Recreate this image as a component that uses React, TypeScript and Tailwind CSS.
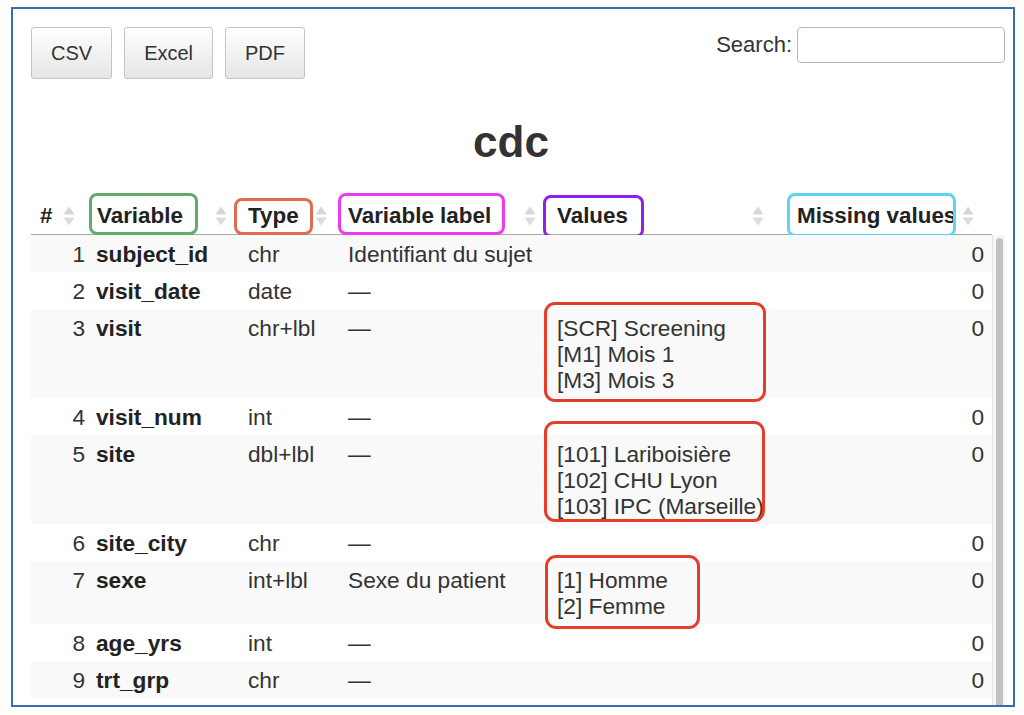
import React from "react";

type Row = {
  n: number;
  name: string;
  type: string;
  label: string;
  values: string[];
  missing: number;
};

const rows: Row[] = [
  { n: 1, name: "subject_id", type: "chr", label: "Identifiant du sujet", values: [], missing: 0 },
  { n: 2, name: "visit_date", type: "date", label: "—", values: [], missing: 0 },
  { n: 3, name: "visit", type: "chr+lbl", label: "—", values: ["[SCR] Screening", "[M1] Mois 1", "[M3] Mois 3"], missing: 0 },
  { n: 4, name: "visit_num", type: "int", label: "—", values: [], missing: 0 },
  { n: 5, name: "site", type: "dbl+lbl", label: "—", values: ["[101] Lariboisière", "[102] CHU Lyon", "[103] IPC (Marseille)"], missing: 0 },
  { n: 6, name: "site_city", type: "chr", label: "—", values: [], missing: 0 },
  { n: 7, name: "sexe", type: "int+lbl", label: "Sexe du patient", values: ["[1] Homme", "[2] Femme"], missing: 0 },
  { n: 8, name: "age_yrs", type: "int", label: "—", values: [], missing: 0 },
  { n: 9, name: "trt_grp", type: "chr", label: "—", values: [], missing: 0 },
];

function SortIcon() {
  return (
    <svg width="12" height="24" viewBox="0 0 12 24" className="shrink-0">
      <polygon points="6,2.5 11.5,10.5 0.5,10.5" fill="#d6d6d6" />
      <polygon points="0.5,13.5 11.5,13.5 6,21.5" fill="#dcdcdc" />
    </svg>
  );
}

const grid = "grid grid-cols-[58px_152px_100px_209px_240px_202px]";

export default function App() {
  return (
    <div className="w-[1024px] h-[715px] bg-white pt-[7px] pl-[11px] font-['Liberation_Sans',Arial,Helvetica,sans-serif] text-[#333]">
      <div className="w-[1004px] h-[700px] border-2 border-[#3b6bb3] overflow-hidden flex flex-col pt-[18px] pl-[18px] pr-[8px]">
        {/* top bar */}
        <div className="flex items-start justify-between">
          <div className="flex gap-3">
            {["CSV", "Excel", "PDF"].map((b) => (
              <button
                key={b}
                className="h-[52px] px-[19px] border border-[#c4c4c4] rounded-[3px] bg-gradient-to-b from-white to-[#e6e6e6] text-[20px] text-[#333] leading-none"
              >
                {b}
              </button>
            ))}
          </div>
          <div className="flex items-center gap-[5px]">
            <span className="text-[22px] leading-[26px] text-[#333]">Search:</span>
            <div className="w-[208px] h-[36px] border border-[#b9b9b9] rounded-[4px] bg-white" />
          </div>
        </div>

        {/* title */}
        <div className="mt-[39px] h-[48px] leading-[48px] text-[44px] font-bold text-center text-[#333] pr-[14px]">
          cdc
        </div>

        {/* header */}
        <div className="mt-[31px] flex">
          <div className={`${grid} relative h-[38px] border-b border-[#a9a9a9] font-bold text-[22.4px] leading-[26px] text-[#222]`}>
            <div className="flex items-center justify-between pl-[9px] pr-[14px]">
              <span>#</span>
              <SortIcon />
            </div>
            <div className="flex items-center justify-between pl-[8px] pr-[14px]">
              <span>Variable</span>
              <SortIcon />
            </div>
            <div className="flex items-center justify-between pl-[7px] pr-[14px]">
              <span>Type</span>
              <SortIcon />
            </div>
            <div className="flex items-center justify-between pl-[7px] pr-[14px]">
              <span>Variable label</span>
              <SortIcon />
            </div>
            <div className="flex items-center justify-between pl-[7px] pr-[26px]">
              <span>Values</span>
              <SortIcon />
            </div>
            <div className="flex items-center justify-between pl-[7px] pr-[18px]">
              <span className="whitespace-nowrap">Missing values</span>
              <SortIcon />
            </div>
            {/* annotation boxes */}
            <div className="absolute left-[58px] top-[-4px] w-[109px] h-[42px] border-[3px] border-[#64aa6e] rounded-[8px]" />
            <div className="absolute left-[203px] top-[1px] w-[79px] h-[37px] border-[3px] border-[#e06b4f] rounded-[8px]" />
            <div className="absolute left-[307px] top-[-4px] w-[167px] h-[42px] border-[3px] border-[#ee3aee] rounded-[8px]" />
            <div className="absolute left-[512px] top-[-2px] w-[101px] h-[43px] border-[3px] border-[#8c1ff2] rounded-[8px]" />
            <div className="absolute left-[756px] top-[-4px] w-[169px] h-[44px] border-[3px] border-[#60d2f6] rounded-[8px]" />
          </div>
          <div className="w-[13px]" />
        </div>

        {/* body */}
        <div className="flex flex-1 min-h-0">
          <div className="relative w-[961px]">
            {rows.map((r, i) => (
              <div
                key={r.n}
                className={`${grid} py-[5.5px] text-[22.7px] leading-[26px] ${i % 2 === 0 ? "bg-[#f9f9f9]" : "bg-white"}`}
              >
                <div className="text-right pr-[4px]">{r.n}</div>
                <div className="pl-[7px] font-bold text-[#222]">{r.name}</div>
                <div className="pl-[7px]">{r.type}</div>
                <div className="pl-[7px] whitespace-nowrap">{r.label}</div>
                <div className="pl-[7px] flex flex-col whitespace-nowrap">
                  {r.values.map((v) => (
                    <span key={v}>{v}</span>
                  ))}
                </div>
                <div className="text-right pr-[8px]">{r.missing}</div>
              </div>
            ))}
            {/* annotation boxes */}
            <div className="absolute left-[513px] top-[67px] w-[222px] h-[100px] border-[3px] border-[#e63d28] rounded-[11px]" />
            <div className="absolute left-[513px] top-[186px] w-[221px] h-[101px] border-[3px] border-[#e63d28] rounded-[11px]" />
            <div className="absolute left-[514px] top-[320px] w-[155px] h-[74px] border-[3px] border-[#e63d28] rounded-[11px]" />
          </div>
          <div className="w-[13px] border-l border-[#e2e2e2] bg-[#f6f6f6] flex justify-center pt-[3px]">
            <div className="w-[7px] h-[500px] rounded-full bg-[#c1c1c1]" />
          </div>
        </div>
      </div>
    </div>
  );
}
